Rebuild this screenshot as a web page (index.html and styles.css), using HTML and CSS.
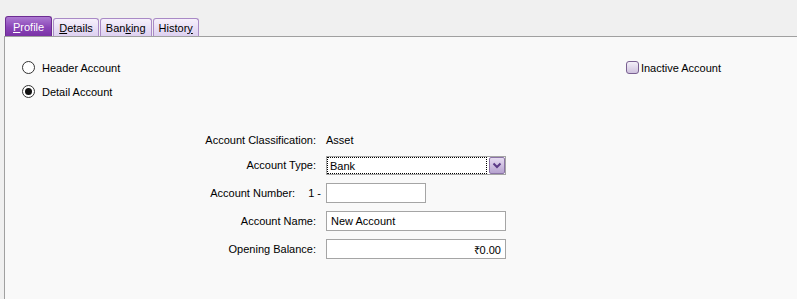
FILE: index.html
```html
<!DOCTYPE html>
<html>
<head>
<meta charset="utf-8">
<link rel="stylesheet" href="styles.css">
</head>
<body>
<div class="window">
  <div class="tabs">
    <div class="tab active"><u>P</u>rofile</div>
    <div class="tab"><u>D</u>etails</div>
    <div class="tab">Ban<u>k</u>ing</div>
    <div class="tab">Histor<u>y</u></div>
  </div>
  <div class="panel">
    <div class="top-row">
      <div class="radios">
        <div class="radio"><span class="circle"></span>Header Account</div>
        <div class="radio"><span class="circle checked"></span>Detail Account</div>
      </div>
      <div class="check"><span class="box"></span>Inactive Account</div>
    </div>
    <div class="form">
      <div class="label first">Account Classification:</div>
      <div class="value first">Asset</div>

      <div class="label">Account Type:</div>
      <div class="select">
        <div class="focus">Bank</div>
        <div class="drop"><svg width="10" height="7" viewBox="0 0 10 7"><path d="M1.5 1.5 L5 5 L8.5 1.5" fill="none" stroke="#5b3a86" stroke-width="2"/></svg></div>
      </div>

      <div class="label"><span>Account Number:</span><span class="prefix">1 -</span></div>
      <div class="field short"></div>

      <div class="label">Account Name:</div>
      <div class="field">New Account</div>

      <div class="label">Opening Balance:</div>
      <div class="field right">₹0.00</div>
    </div>
  </div>
</div>
</body>
</html>
```
FILE: styles.css
```css
* { box-sizing: border-box; }
html, body { margin: 0; padding: 0; }
body {
  width: 797px;
  height: 299px;
  overflow: hidden;
  background: #f0f0f0;
  font-family: "Liberation Sans", Arial, sans-serif;
  font-size: 11px;
  color: #000;
}
.window { display: flex; flex-direction: column; height: 299px; padding-top: 16px; }
.tabs {
  display: flex;
  align-items: flex-end;
  gap: 1px;
  padding-left: 5px;
  height: 20px;
}
.tab {
  height: 18px;
  padding: 0 5px;
  display: flex;
  align-items: center;
  border: 1px solid #a98ac6;
  border-bottom: none;
  border-radius: 3px 3px 0 0;
  background: linear-gradient(#f6f0fb, #ddd0f0);
  color: #000;
}
.tab u { text-decoration: underline; }
.tab.active {
  height: 20px;
  padding: 0 7px;
  color: #fff;
  border-color: #6c2c92;
  background: linear-gradient(#ad7ad2, #8a45b8 55%, #7a32a6);
}
.panel {
  flex: 1;
  margin-left: 4px;
  border-left: 1px solid #a0a0a0;
  border-top: 1px solid #a0a0a0;
  background: #f9f9f9;
}
.top-row {
  display: flex;
  justify-content: space-between;
  padding: 24px 0 0 17px;
}
.radios { display: flex; flex-direction: column; gap: 11px; }
.radio, .check { display: flex; align-items: center; height: 13px; }
.circle {
  width: 13px; height: 13px;
  border: 1px solid #333;
  border-radius: 50%;
  background: #fff;
  margin-right: 7px;
  display: flex; align-items: center; justify-content: center;
}
.circle.checked::after {
  content: "";
  width: 7px; height: 7px; border-radius: 50%;
  background: #111;
}
.check { margin-right: 76px; }
.box {
  width: 13px; height: 13px;
  border: 1px solid #7a6092;
  border-radius: 3px;
  background: linear-gradient(#f4f0f8, #cfc2de);
  margin-right: 2px;
}
.form {
  display: grid;
  grid-template-columns: 311px 180px;
  grid-auto-rows: 20px;
  column-gap: 10px;
  row-gap: 8px;
  margin-top: 29px;
}
.label {
  display: flex;
  justify-content: flex-end;
  align-items: center;
  white-space: nowrap;
}
.value { display: flex; align-items: center; }
.first { padding-top: 5px; }
.prefix { margin-left: 13px; margin-right: -5px; }
.select {
  height: 19px;
  margin-top: 1px;
  width: 180px;
  border: 1px solid #a5a5a5;
  background: #fff;
  display: flex;
  align-items: stretch;
}
.focus {
  flex: 1;
  border: 1px dotted #000;
  padding-left: 2px;
  display: flex;
  align-items: center;
  margin-right: 2px;
}
.drop {
  width: 16px;
  border: 1px solid #8b74a6;
  border-radius: 2px;
  background: linear-gradient(#e6dcf1, #b7a3d0);
  display: flex; align-items: center; justify-content: center;
}
.field {
  height: 20px;
  border: 1px solid #a5a5a5;
  background: #fff;
  display: flex;
  align-items: center;
  padding: 0 4px;
}
.field.short { width: 100px; }
.field.right { justify-content: flex-end; }
```
